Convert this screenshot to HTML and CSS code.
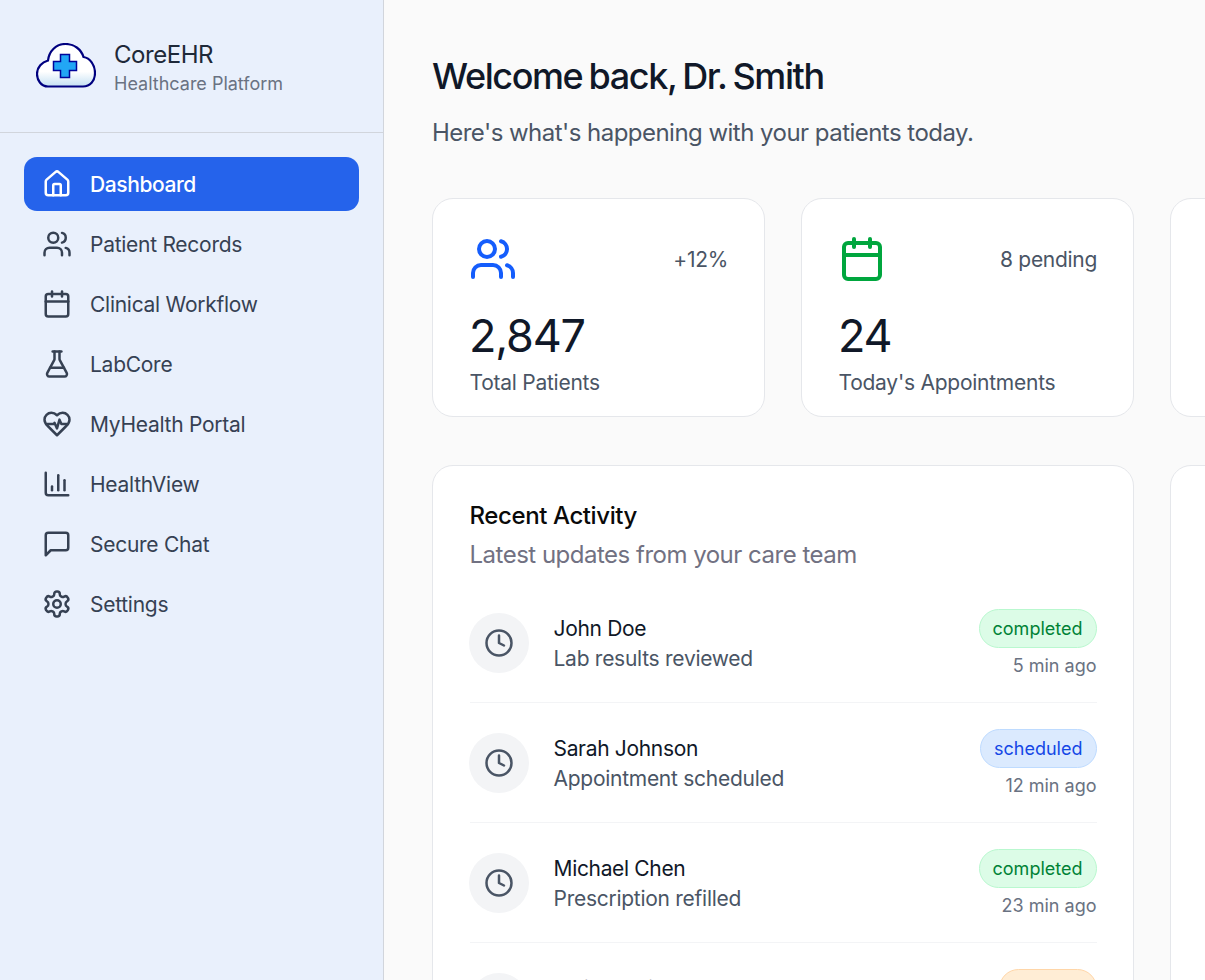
FILE: index.html
```html
<!DOCTYPE html>
<html lang="en">
<head>
<meta charset="utf-8">
<title>CoreEHR</title>
<link rel="stylesheet" href="styles.css">
</head>
<body>
<div class="app">
  <aside class="sidebar">
    <header class="brand">
      <svg class="logo" viewBox="0 0 60 45" width="60" height="45">
        <defs>
          <linearGradient id="cloudFill" x1="0" y1="0" x2="0" y2="1">
            <stop offset="0.65" stop-color="#ffffff"/>
            <stop offset="1" stop-color="#c4e0f3"/>
          </linearGradient>
        </defs>
        <path d="M12 43.5C5 43.5 1 37 1 31C1 24 6 19 12 17.5C13 8 20 1 29.5 1C38 1 45 6 47.5 14C54 15 59 22 59 30C59 38 54 43.5 47 43.5Z" fill="url(#cloudFill)" stroke="#00007f" stroke-width="2.2"/>
        <path d="M24.5 11.5h9v7h7v9h-7v7h-9v-7h-7v-9h7z" fill="#22a6f5" stroke="#00059a" stroke-width="1.5"/>
      </svg>
      <div class="brand-text">
        <div class="brand-name">CoreEHR</div>
        <div class="brand-sub">Healthcare Platform</div>
      </div>
    </header>
    <nav class="nav">
      <a class="nav-item active"><svg class="icon-nav" viewBox="0 0 24 24"><path d="M15 21v-8a1 1 0 0 0-1-1h-4a1 1 0 0 0-1 1v8"/><path d="M3 10a2 2 0 0 1 .709-1.528l7-5.999a2 2 0 0 1 2.582 0l7 5.999A2 2 0 0 1 21 10v9a2 2 0 0 1-2 2H5a2 2 0 0 1-2-2z"/></svg><span class="nav-label">Dashboard</span></a>
      <a class="nav-item"><svg class="icon-nav" viewBox="0 0 24 24"><path d="M16 21v-2a4 4 0 0 0-4-4H6a4 4 0 0 0-4 4v2"/><circle cx="9" cy="7" r="4"/><path d="M22 21v-2a4 4 0 0 0-3-3.87"/><path d="M16 3.13a4 4 0 0 1 0 7.75"/></svg><span class="nav-label">Patient Records</span></a>
      <a class="nav-item"><svg class="icon-nav" viewBox="0 0 24 24"><path d="M8 2v4"/><path d="M16 2v4"/><rect x="3" y="4" width="18" height="18" rx="2"/><path d="M3 10h18"/></svg><span class="nav-label">Clinical Workflow</span></a>
      <a class="nav-item"><svg class="icon-nav" viewBox="0 0 24 24"><path d="M14 2v6a2 2 0 0 0 .245.96l5.51 10.08A2 2 0 0 1 18 22H6a2 2 0 0 1-1.755-2.96l5.51-10.08A2 2 0 0 0 10 8V2"/><path d="M6.453 15h11.094"/><path d="M8.5 2h7"/></svg><span class="nav-label">LabCore</span></a>
      <a class="nav-item"><svg class="icon-nav" viewBox="0 0 24 24"><path d="M19 14c1.49-1.46 3-3.21 3-5.5A5.5 5.5 0 0 0 16.5 3c-1.76 0-3 .5-4.5 2-1.5-1.5-2.74-2-4.5-2A5.5 5.5 0 0 0 2 8.5c0 2.3 1.5 4.05 3 5.5l7 7Z"/><path d="M3.22 12H9.5l.5-1 2 4.5 2-7 1.5 3.5h5.27"/></svg><span class="nav-label">MyHealth Portal</span></a>
      <a class="nav-item"><svg class="icon-nav" viewBox="0 0 24 24"><path d="M3 3v16a2 2 0 0 0 2 2h16"/><path d="M18 17V9"/><path d="M13 17V5"/><path d="M8 17v-3"/></svg><span class="nav-label">HealthView</span></a>
      <a class="nav-item"><svg class="icon-nav" viewBox="0 0 24 24"><path d="M21 15a2 2 0 0 1-2 2H7l-4 4V5a2 2 0 0 1 2-2h14a2 2 0 0 1 2 2z"/></svg><span class="nav-label">Secure Chat</span></a>
      <a class="nav-item"><svg class="icon-nav" viewBox="0 0 24 24"><path d="M12.22 2h-.44a2 2 0 0 0-2 2v.18a2 2 0 0 1-1 1.73l-.43.25a2 2 0 0 1-2 0l-.15-.08a2 2 0 0 0-2.73.73l-.22.38a2 2 0 0 0 .73 2.73l.15.1a2 2 0 0 1 1 1.72v.51a2 2 0 0 1-1 1.74l-.15.09a2 2 0 0 0-.73 2.73l.22.38a2 2 0 0 0 2.73.73l.15-.08a2 2 0 0 1 2 0l.43.25a2 2 0 0 1 1 1.73V20a2 2 0 0 0 2 2h.44a2 2 0 0 0 2-2v-.18a2 2 0 0 1 1-1.73l.43-.25a2 2 0 0 1 2 0l.15.08a2 2 0 0 0 2.73-.73l.22-.39a2 2 0 0 0-.73-2.73l-.15-.08a2 2 0 0 1-1-1.74v-.5a2 2 0 0 1 1-1.74l.15-.09a2 2 0 0 0 .73-2.73l-.22-.38a2 2 0 0 0-2.73-.73l-.15.08a2 2 0 0 1-2 0l-.43-.25a2 2 0 0 1-1-1.73V4a2 2 0 0 0-2-2z"/><circle cx="12" cy="12" r="3"/></svg><span class="nav-label">Settings</span></a>
    </nav>
  </aside>
  <main class="main">
    <h1 class="title">Welcome back, Dr. Smith</h1>
    <p class="subtitle">Here's what's happening with your patients today.</p>
    <section class="stats">
      <article class="card stat">
        <div class="stat-top">
          <svg class="icon-stat blue" viewBox="0 0 24 24"><path d="M16 21v-2a4 4 0 0 0-4-4H6a4 4 0 0 0-4 4v2"/><circle cx="9" cy="7" r="4"/><path d="M22 21v-2a4 4 0 0 0-3-3.87"/><path d="M16 3.13a4 4 0 0 1 0 7.75"/></svg>
          <span class="stat-note">+12%</span>
        </div>
        <div class="stat-value">2,847</div>
        <div class="stat-label">Total Patients</div>
      </article>
      <article class="card stat">
        <div class="stat-top">
          <svg class="icon-stat green" viewBox="0 0 24 24"><path d="M8 2v4"/><path d="M16 2v4"/><rect x="3" y="4" width="18" height="18" rx="2"/><path d="M3 10h18"/></svg>
          <span class="stat-note">8 pending</span>
        </div>
        <div class="stat-value">24</div>
        <div class="stat-label">Today's Appointments</div>
      </article>
      <article class="card stat"></article>
    </section>
    <section class="panels">
      <article class="card panel">
        <h2 class="panel-title">Recent Activity</h2>
        <p class="panel-sub">Latest updates from your care team</p>
        <ul class="activity">
          <li class="row">
            <span class="avatar"><svg class="icon-clock" viewBox="0 0 24 24"><circle cx="12" cy="12" r="10"/><path d="M12 6v6l4 2"/></svg></span>
            <div class="row-main"><div class="row-name">John Doe</div><div class="row-desc">Lab results reviewed</div></div>
            <div class="row-meta"><span class="badge badge-green">completed</span><span class="row-time">5 min ago</span></div>
          </li>
          <li class="row">
            <span class="avatar"><svg class="icon-clock" viewBox="0 0 24 24"><circle cx="12" cy="12" r="10"/><path d="M12 6v6l4 2"/></svg></span>
            <div class="row-main"><div class="row-name">Sarah Johnson</div><div class="row-desc">Appointment scheduled</div></div>
            <div class="row-meta"><span class="badge badge-blue">scheduled</span><span class="row-time">12 min ago</span></div>
          </li>
          <li class="row">
            <span class="avatar"><svg class="icon-clock" viewBox="0 0 24 24"><circle cx="12" cy="12" r="10"/><path d="M12 6v6l4 2"/></svg></span>
            <div class="row-main"><div class="row-name">Michael Chen</div><div class="row-desc">Prescription refilled</div></div>
            <div class="row-meta"><span class="badge badge-green">completed</span><span class="row-time">23 min ago</span></div>
          </li>
          <li class="row">
            <span class="avatar"><svg class="icon-clock" viewBox="0 0 24 24"><circle cx="12" cy="12" r="10"/><path d="M12 6v6l4 2"/></svg></span>
            <div class="row-main"><div class="row-name">Emily Davis</div><div class="row-desc">Consultation requested</div></div>
            <div class="row-meta"><span class="badge badge-orange">pending</span><span class="row-time">1 hour ago</span></div>
          </li>
        </ul>
      </article>
      <article class="card panel"></article>
    </section>
  </main>
</div>
</body>
</html>
```
FILE: styles.css
```css
* { box-sizing: border-box; }
html, body { height: 100%; }
body {
  margin: 0;
  overflow: hidden;
  font-family: Inter, "Liberation Sans", sans-serif;
  color: #101828;
  background: #fafafa;
}
svg { display: block; flex: none; }
.app { display: flex; height: 100vh; overflow: hidden; }

.sidebar {
  width: 384px;
  flex: none;
  background: #e9f0fc;
  border-right: 1px solid #d1d5dc;
}
.brand {
  height: 133px;
  padding: 0 36px;
  display: flex;
  align-items: center;
  gap: 18px;
  border-bottom: 1px solid #d1d5dc;
}
.logo { margin-bottom: 2px; }
.brand-text { padding-top: 4px; }
.brand-name { font-size: 24px; line-height: 31px; letter-spacing: -0.45px; color: #1e2939; }
.brand-sub { font-size: 18px; line-height: 27px; color: #6a7282; }

.nav {
  padding: 24px 24px 0;
  display: flex;
  flex-direction: column;
  gap: 6px;
}
.nav-item {
  height: 54px;
  padding: 0 18px;
  display: flex;
  align-items: center;
  gap: 18px;
  border-radius: 13px;
  font-size: 21px;
  letter-spacing: -0.27px;
  color: #364153;
}
.nav-label { padding-top: 1px; }
.nav-item.active { background: #2563eb; color: #fff; font-weight: 500; letter-spacing: -0.4px; }
.icon-nav, .icon-stat, .icon-clock {
  fill: none;
  stroke: currentColor;
  stroke-width: 2;
  stroke-linecap: round;
  stroke-linejoin: round;
}
.icon-nav { width: 30px; height: 30px; }

.main { flex: 1; min-width: 0; padding: 48px 0 0 48px; overflow: hidden; }
.title {
  margin: 0 0 11px;
  padding-top: 1px;
  font-size: 36px;
  line-height: 54px;
  font-weight: 500;
  letter-spacing: -1.4px;
  word-spacing: -2px;
  color: #101828;
}
.subtitle {
  margin: 0 0 47px;
  padding-top: 1px;
  font-size: 24px;
  line-height: 36px;
  letter-spacing: -0.53px;
  color: #4a5565;
}

.card {
  background: #fff;
  border: 1px solid #e5e7eb;
  border-radius: 21px;
}
.stats {
  display: grid;
  grid-template-columns: 333px 333px 333px;
  gap: 36px;
  margin-bottom: 48px;
}
.stat { height: 219px; padding: 36px 36px 0; }
.stat-top { display: flex; justify-content: space-between; align-items: center; margin-bottom: 26px; }
.icon-stat { width: 48px; height: 48px; }
.blue { color: #155dfc; }
.green { color: #00a63e; }
.stat-note { padding-top: 2px; font-size: 21px; line-height: 30px; letter-spacing: -0.3px; color: #4a5565; }
.stat-value { font-size: 45px; line-height: 54px; letter-spacing: -1.2px; color: #101828; }
.stat-label { margin-top: 5px; padding-left: 0.5px; font-size: 21px; line-height: 30px; letter-spacing: -0.25px; color: #4a5565; }

.panels {
  display: grid;
  grid-template-columns: 702px 702px;
  gap: 36px;
}
.panel { padding: 32px 36.5px 0; min-height: 700px; }
.panel-title {
  margin: 0;
  font-size: 24px;
  line-height: 36px;
  font-weight: 500;
  letter-spacing: -0.4px;
  color: #0a0a0a;
}
.panel-sub {
  margin: 3px 0 0;
  font-size: 24px;
  line-height: 36px;
  letter-spacing: -0.5px;
  color: #717182;
}
.activity { list-style: none; margin: 10px 0 0; padding: 0; }
.row {
  height: 120px;
  display: flex;
  align-items: center;
  gap: 24.5px;
  border-bottom: 1px solid #f3f4f6;
}
.avatar {
  width: 60px;
  height: 60px;
  flex: none;
  margin-left: -0.5px;
  border-radius: 50%;
  background: #f3f4f6;
  display: flex;
  align-items: center;
  justify-content: center;
  color: #4a5565;
}
.icon-clock { width: 30px; height: 30px; }
.row-main { flex: 1; min-width: 0; padding-top: 2px; }
.row-name { font-size: 21px; line-height: 30px; letter-spacing: -0.33px; color: #101828; }
.row-desc { font-size: 21px; line-height: 30px; letter-spacing: -0.27px; color: #4a5565; }
.row-meta { display: flex; flex-direction: column; align-items: flex-end; gap: 4px; padding-top: 3px; }
.badge {
  height: 39px;
  padding: 0 13px;
  display: flex;
  align-items: center;
  border: 1px solid transparent;
  border-radius: 20px;
  font-size: 18px;
}
.badge-green { background: #dcfce7; border-color: #b9f8cf; color: #008236; }
.badge-blue { background: #dbeafe; border-color: #bedbff; color: #1447e6; }
.badge-orange { background: #ffedd5; border-color: #ffd6a8; color: #ca3500; }
.row-time { font-size: 18px; line-height: 27px; color: #6a7282; }
```
